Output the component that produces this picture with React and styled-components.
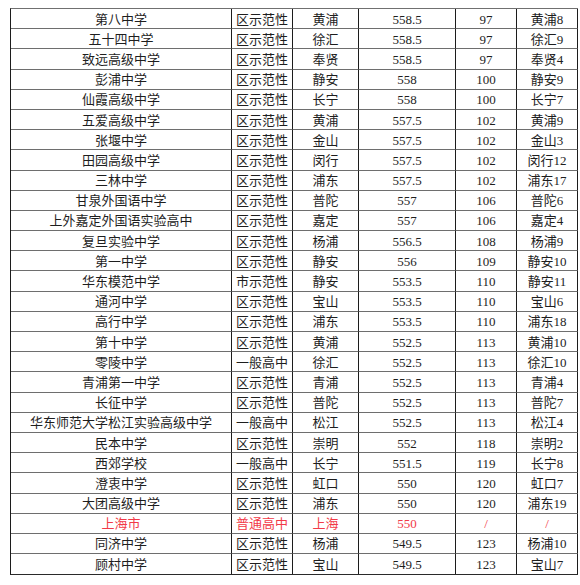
import React from "react";
import styled, { createGlobalStyle } from "styled-components";

const Global = createGlobalStyle`
  html, body { margin: 0; padding: 0; background: #fff; }
  body { font-family: "Liberation Serif", "Noto Sans CJK SC", serif; }
`;

const Page = styled.div`
  padding: 8px 0 0 10px;
  width: 580px;
  height: 585px;
  box-sizing: border-box;
  overflow: hidden;
`;

const Table = styled.div`
  display: grid;
  grid-template-columns: 221px 61px 66px 97px 61px 61px;
  grid-auto-rows: 20.19px;
  width: max-content;
  border-left: 1px solid #1c1c1c;
  border-top: 1px solid #707070;
  border-bottom: 1px solid #2a2a2a;
`;

const Cell = styled.div`
  box-sizing: border-box;
  border-right: 1px solid #1c1c1c;
  border-bottom: ${(p) => (p.$last ? "none" : "1px solid #6e6e6e")};
  display: flex;
  align-items: center;
  justify-content: center;
  padding-top: 1px;
  font-family: "Liberation Serif", "Noto Sans CJK SC", serif;
  font-size: 13px;
  line-height: 1;
  white-space: nowrap;
  color: ${(p) => (p.$red ? "#f23a48" : "#1e1e1e")};
`;

const rows = [
  ["第八中学", "区示范性", "黄浦", "558.5", "97", "黄浦8"],
  ["五十四中学", "区示范性", "徐汇", "558.5", "97", "徐汇9"],
  ["致远高级中学", "区示范性", "奉贤", "558.5", "97", "奉贤4"],
  ["彭浦中学", "区示范性", "静安", "558", "100", "静安9"],
  ["仙霞高级中学", "区示范性", "长宁", "558", "100", "长宁7"],
  ["五爱高级中学", "区示范性", "黄浦", "557.5", "102", "黄浦9"],
  ["张堰中学", "区示范性", "金山", "557.5", "102", "金山3"],
  ["田园高级中学", "区示范性", "闵行", "557.5", "102", "闵行12"],
  ["三林中学", "区示范性", "浦东", "557.5", "102", "浦东17"],
  ["甘泉外国语中学", "区示范性", "普陀", "557", "106", "普陀6"],
  ["上外嘉定外国语实验高中", "区示范性", "嘉定", "557", "106", "嘉定4"],
  ["复旦实验中学", "区示范性", "杨浦", "556.5", "108", "杨浦9"],
  ["第一中学", "区示范性", "静安", "556", "109", "静安10"],
  ["华东模范中学", "市示范性", "静安", "553.5", "110", "静安11"],
  ["通河中学", "区示范性", "宝山", "553.5", "110", "宝山6"],
  ["高行中学", "区示范性", "浦东", "553.5", "110", "浦东18"],
  ["第十中学", "区示范性", "黄浦", "552.5", "113", "黄浦10"],
  ["零陵中学", "一般高中", "徐汇", "552.5", "113", "徐汇10"],
  ["青浦第一中学", "区示范性", "青浦", "552.5", "113", "青浦4"],
  ["长征中学", "区示范性", "普陀", "552.5", "113", "普陀7"],
  ["华东师范大学松江实验高级中学", "一般高中", "松江", "552.5", "113", "松江4"],
  ["民本中学", "区示范性", "崇明", "552", "118", "崇明2"],
  ["西郊学校", "一般高中", "长宁", "551.5", "119", "长宁8"],
  ["澄衷中学", "区示范性", "虹口", "550", "120", "虹口7"],
  ["大团高级中学", "区示范性", "浦东", "550", "120", "浦东19"],
  ["上海市", "普通高中", "上海", "550", "/", "/", true],
  ["同济中学", "区示范性", "杨浦", "549.5", "123", "杨浦10"],
  ["顾村中学", "区示范性", "宝山", "549.5", "123", "宝山7"],
];

export default function App() {
  return (
    <Page>
      <Global />
      <Table>
        {rows.map((r, i) =>
          r.slice(0, 6).map((c, j) => (
            <Cell key={`${i}-${j}`} $red={r[6]} $last={i === rows.length - 1}>
              {c}
            </Cell>
          ))
        )}
      </Table>
    </Page>
  );
}
